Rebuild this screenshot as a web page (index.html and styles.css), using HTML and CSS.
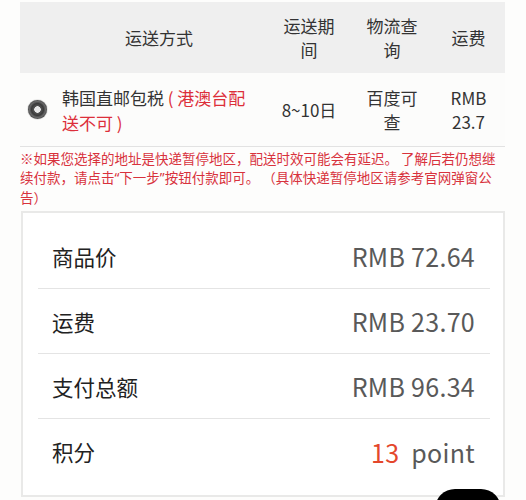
FILE: index.html
```html
<!DOCTYPE html>
<html lang="zh-CN">
<head>
<meta charset="utf-8">
<title>运送方式</title>
<link rel="stylesheet" href="styles.css">
</head>
<body>
<div class="page">
  <div class="ship">
    <div class="row head">
      <div class="cell c-radio"></div>
      <div class="cell c-name center">运送方式</div>
      <div class="cell c-col">运送期间</div>
      <div class="cell c-col">物流查询</div>
      <div class="cell c-fee">运费</div>
    </div>
    <div class="row body">
      <div class="cell c-radio"><span class="radio"></span></div>
      <div class="cell c-name">韩国直邮包税 <span class="red">(&nbsp;港澳台配送不可&nbsp;)</span></div>
      <div class="cell c-col">8~10日</div>
      <div class="cell c-col">百度可查</div>
      <div class="cell c-fee">RMB 23.7</div>
    </div>
  </div>
  <p class="notice">※如果您选择的地址是快递暂停地区，配送时效可能会有延迟。 了解后若仍想继续付款，请点击<span class="q">“</span>下一步<span class="q">”</span>按钮付款即可。 （具体快递暂停地区请参考官网弹窗公告）</p>
  <div class="summary">
    <div class="line"><span class="label">商品价</span><span class="value">RMB 72.64</span></div>
    <div class="line"><span class="label">运费</span><span class="value">RMB 23.70</span></div>
    <div class="line"><span class="label">支付总额</span><span class="value">RMB 96.34</span></div>
    <div class="line last"><span class="label">积分</span><span class="value"><span class="pt">13</span> point</span></div>
  </div>
  <div class="fab"></div>
</div>
</body>
</html>
```
FILE: styles.css
```css
html, body {
  margin: 0;
  padding: 0;
  background: #fdfdfc;
}
body {
  font-family: "Noto Sans CJK SC", "Noto Sans", sans-serif;
  color: #333;
  width: 526px;
  height: 500px;
  overflow: hidden;
}
.page {
  position: relative;
  height: 500px;
  padding: 2px 21px 0 20px;
  box-sizing: border-box;
}
.ship {
  border-bottom: 1px solid #e2e2e2;
}
.row {
  display: grid;
  grid-template-columns: 34px 212px 86px 80px 73px;
  align-items: center;
}
.head {
  background: #efefef;
  height: 71px;
}
.body {
  height: 73px;
  background: #fcfcfb;
}
.cell {
  font-size: 17px;
  line-height: 24px;
  text-align: center;
  padding: 0 12px;
}
.c-radio {
  padding: 0;
  display: flex;
  justify-content: center;
}
.c-name {
  text-align: left;
  padding: 0 10px 0 8px;
  line-height: 25px;
}
.c-name.center {
  text-align: center;
}
.c-fee {
  padding: 0 10px;
}
.red {
  color: #dc2f3a;
}
.radio {
  width: 19px;
  height: 19px;
  border-radius: 50%;
  background: radial-gradient(circle at 50% 50%, #e8e8e8 0 3px, #555 3.5px, #3a3a3a 6px, #6a6a6a 8px, #444 9.5px);
  box-shadow: 0 0 1px #222;
}
.notice {
  margin: 2px 7px 0 0;
  font-size: 13.5px;
  line-height: 19px;
  color: #d8323c;
}
.q {
  font-family: "Noto Sans", sans-serif;
}
.summary {
  margin: 4px 0 0 1px;
  border: 2px solid #e9e9e8;
  background: #fff;
  padding: 11px 13px 0 15px;
  height: 286px;
  box-sizing: border-box;
}
.line {
  display: flex;
  justify-content: space-between;
  align-items: center;
  height: 65px;
  padding: 0 15px 0 14px;
  border-bottom: 1.5px solid #e4e4e4;
  box-sizing: border-box;
}
.line.last {
  border-bottom: none;
}
.label {
  font-size: 21.5px;
  color: #222;
}
.value {
  font-size: 25px;
  color: #595959;
  letter-spacing: 0.3px;
}
.pt {
  color: #e4472c;
  margin-right: 6px;
}
.fab {
  position: absolute;
  left: 435px;
  top: 489px;
  width: 66px;
  height: 40px;
  border-radius: 22px;
  background: #000;
}
```
